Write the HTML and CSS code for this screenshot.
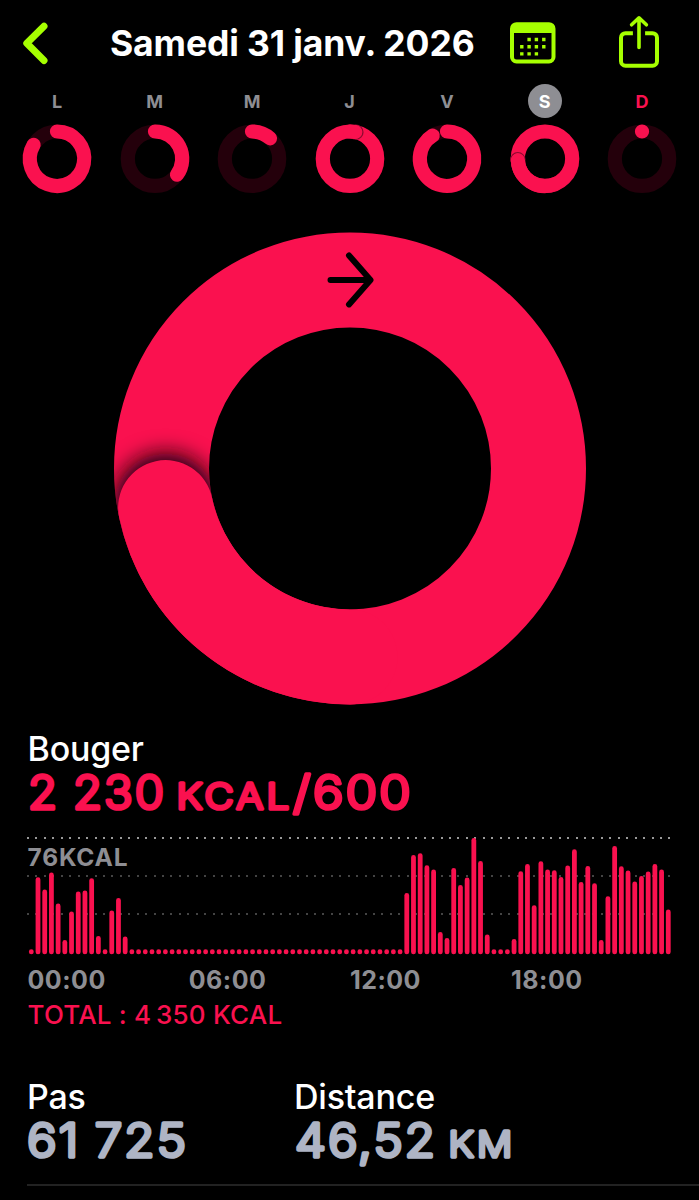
FILE: index.html
```
<!DOCTYPE html>
<html lang="fr">
<head>
<meta charset="utf-8">
<title>Activité</title>
<link rel="stylesheet" href="styles.css">
</head>
<body>
<header class="header">
  <svg class="back" width="32" height="48" viewBox="0 0 32 48"><path d="M25 7.300L7.800 24.200L25 41.500"/></svg>
  <h1 class="title"><span>Samedi 31 janv. 2026</span></h1>
  <svg class="calendar" width="46" height="42" viewBox="0 0 46 42">
    <rect class="frame" x="2" y="3.200" width="41.500" height="37.200" rx="4.500"/>
    <path class="fill" d="M2 12V7a5 5 0 0 1 5-5h31.500a5 5 0 0 1 5 5v5z"/>
    <path class="fill" d="M17.400 16.800h3.400v3.400h-3.400zM24.700 16.800h3.400v3.400h-3.400zM32.100 16.800h3.400v3.400h-3.400zM10.100 24h3.400v3.400h-3.400zM17.400 24h3.400v3.400h-3.400zM24.700 24h3.400v3.400h-3.400zM32.100 24h3.400v3.400h-3.400zM10.100 31.200h3.400v3.400h-3.400zM17.400 31.200h3.400v3.400h-3.400zM24.700 31.200h3.400v3.400h-3.400z"/>
  </svg>
  <svg class="share" width="42" height="54" viewBox="0 0 42 54">
    <path d="M14.900 19.200H7.500a4.500 4.500 0 0 0-4.500 4.500v23.500a4.500 4.500 0 0 0 4.500 4.500h27a4.500 4.500 0 0 0 4.500-4.500v-23.500a4.500 4.500 0 0 0-4.500-4.500h-7.400"/>
    <path class="arrow" d="M21 33.500V4M13.600 10.800L21 3.800L28.400 10.800"/>
  </svg>
</header>
<nav class="week" id="week"></nav>
<section class="hero">
  <svg width="480" height="480" viewBox="0 0 480 480">
    <defs>
      <filter id="soft" x="-60%" y="-60%" width="220%" height="220%"><feGaussianBlur stdDeviation="10.500"/></filter>
      <mask id="ring-mask" maskUnits="userSpaceOnUse" x="0" y="0" width="480" height="480"><circle cx="240" cy="240" r="188.500" fill="none" stroke="#fff" stroke-width="95"/></mask>
    </defs>
    <circle class="move" cx="240" cy="240" r="188.500" stroke-width="95"/>
    <g mask="url(#ring-mask)"><circle class="shade" cx="55.600" cy="276" r="51" filter="url(#soft)"/></g>
    <path class="move cap" d="M240 428.500A188.500 188.500 0 0 1 55.600 279.200" stroke-width="95"/>
    <path class="direction" d="M220.500 51.500H260M239 27L260.500 51.500L239 76"/>
  </svg>
</section>
<section class="move-stats">
  <h2 class="label">Bouger</h2>
  <svg class="value pink" width="420" height="54" viewBox="0 0 420 54">
    <text x="0" y="41.500" textLength="138" lengthAdjust="spacingAndGlyphs">2&#8197;230</text>
    <text class="unit" x="148.500" y="41.500" textLength="116" lengthAdjust="spacingAndGlyphs">KCAL</text>
    <text x="265" y="41.500" textLength="120" lengthAdjust="spacingAndGlyphs">/600</text>
  </svg>
  <div class="chart">
    <span class="peak">76KCAL</span>
    <div class="rule top"></div><div class="rule"></div><div class="rule"></div>
    <svg class="bars" id="bars" width="643" height="118" viewBox="0 0 643 118"></svg>
  </div>
  <div class="hours"><span>00:00</span><span>06:00</span><span>12:00</span><span>18:00</span></div>
  <p class="total">TOTAL : 4&#8239;350 KCAL</p>
</section>
<section class="details">
  <div>
    <h2 class="label">Pas</h2>
    <svg class="value grey" width="200" height="60" viewBox="0 0 200 60">
      <text x="0" y="41.500" textLength="161" lengthAdjust="spacingAndGlyphs">61&#8197;725</text>
    </svg>
  </div>
  <div>
    <h2 class="label">Distance</h2>
    <svg class="value grey" width="260" height="60" viewBox="0 0 260 60">
      <text x="1" y="41.500" textLength="142" lengthAdjust="spacingAndGlyphs">46,52</text>
      <text class="unit" x="154.500" y="41.500" textLength="67" lengthAdjust="spacingAndGlyphs">KM</text>
    </svg>
  </div>
</section>
<script src="app.js"></script>
</body>
</html>
```

FILE: styles.css
```
* { box-sizing: border-box; }
body {
  margin: 0;
  width: 699px;
  height: 1200px;
  overflow: hidden;
  background: #000;
  color: #fff;
  font-family: Inter, "Liberation Sans", sans-serif;
}
svg { display: block; overflow: visible; flex: none; }
h1, h2, p { margin: 0; white-space: nowrap; }

.header { display: flex; align-items: flex-start; height: 84px; padding: 0 39px 0 19px; }
.header svg { fill: none; stroke: #a6ff00; stroke-linejoin: round; }
.back { margin-top: 19px; stroke-width: 7; stroke-linecap: round; }
.title { width: 364px; margin: 22px 0 0 59px; font-size: 35.5px; line-height: 43px; font-weight: 750; letter-spacing: -0.12px; }
.calendar { margin: 21px 0 0 36px; }
.calendar .frame { stroke-width: 4; }
.header .calendar .fill { fill: #a6ff00; stroke: none; }
.share { margin: 14px 0 0 auto; stroke-width: 4; }
.share .arrow { stroke-linecap: round; stroke-width: 3.600; }

.week { display: grid; grid-template-columns: repeat(7, 97.500px); margin-left: 8.300px; height: 144px; }
.day { display: flex; flex-direction: column; align-items: center; }
.day span {
  width: 34px; height: 34px; border-radius: 50%;
  font-size: 18px; line-height: 35px; font-weight: 700; text-align: center; color: #8e8e93;
}
.day svg { margin-top: 5px; }
.day .today { background: #8e8e93; color: #fff; }
.day .next { color: #fa114f; }
.track { fill: none; stroke: #24000b; }
.move { fill: none; stroke: #fa114f; }
.cap { stroke-linecap: round; }
.shade { fill: #17000a; }

.hero { display: flex; justify-content: center; height: 505px; padding-left: 1px; }
.hero svg { transform: translateY(.4px); }
.direction { fill: none; stroke: #000; stroke-width: 6; stroke-linecap: round; stroke-linejoin: round; }

.label { font-size: 34px; line-height: 40px; font-weight: 550; letter-spacing: -0.2px; }
.move-stats { padding-left: 27.500px; height: 348px; }
.move-stats .label { margin-top: -4px; }
.value { margin-top: -2px; font-size: 46px; font-weight: 350; letter-spacing: 2px; stroke-width: 3.600px; stroke-linejoin: round; stroke-linecap: round; }
.value .unit { font-size: 36px; letter-spacing: 3px; }
.pink { fill: #fa114f; stroke: #fa114f; }
.grey { fill: #aeb4c4; stroke: #aeb4c4; }

.chart { position: relative; width: 643px; height: 117.500px; margin: 16px 0 0 -.500px; }
.rule { height: 2px; margin-bottom: 36px; background: repeating-linear-gradient(90deg, #444 0 2px, transparent 2px 8.440px); }
.rule.top { background: repeating-linear-gradient(90deg, #999 0 2px, transparent 2px 8.440px); }
.peak { position: absolute; left: .500px; top: 6px; font-size: 24.500px; line-height: 29px; font-weight: 720; letter-spacing: .8px; color: #8e8e93; }
.bars { position: absolute; left: 0; top: 0; fill: #fa114f; }

.hours { display: grid; grid-template-columns: repeat(4, 161.200px); margin-top: 10px; font-size: 25px; line-height: 30px; font-weight: 650; letter-spacing: .5px; color: #8e8e93; }
.total { margin-top: 4.500px; font-size: 26px; line-height: 32px; font-weight: 520; letter-spacing: .2px; color: #fa114f; }

.details { display: grid; grid-template-columns: 267px 1fr; height: 109px; margin-left: 27px; border-bottom: 2px solid #222; }
```

FILE: app.js
```
const SVG_START = '<svg width="70" height="70" viewBox="0 -0.7 70 70">';

// Ring progress for each weekday, as a fraction of the daily goal.
const days = [
  ['L', 0.835], ['M', 0.35], ['M', 0.115], ['J', 1.03], ['V', 0.912], ['S', 1.74, 'today'], ['D', 0.0001, 'next']
];

function arc(from, to) {
  const point = t => {
    const a = t * 2 * Math.PI;
    return `${35 + 27.2 * Math.sin(a)} ${35 - 27.2 * Math.cos(a)}`;
  };
  const large = to - from > 0.5 ? 1 : 0;
  return `<path class="move cap" stroke-width="14.2" d="M${point(from)}A27.2 27.2 0 ${large} 1 ${point(to)}"/>`;
}

document.getElementById('week').innerHTML = days.map(([name, value, state = '']) => {
  let ring = '<circle class="track" cx="35" cy="35" r="27.2" stroke-width="14.2"/>';
  if (value < 1) {
    ring += arc(0, value);
  } else {
    const end = value - 1;
    const a = end * 2 * Math.PI;
    const x = 35 + 27.2 * Math.sin(a + 0.03);
    const y = 35 - 27.2 * Math.cos(a + 0.03);
    ring += '<circle class="move" cx="35" cy="35" r="27.2" stroke-width="14.2"/>' +
      `<circle cx="${x}" cy="${y}" r="7" fill="none" stroke="#8d0a30" stroke-width="1.4"/>` +
      arc(Math.max(0, end - 0.3), end);
  }
  return `<div class="day"><span class="${state}">${name}</span>${SVG_START}${ring}</svg></div>`;
}).join('');

// Bar heights in pixels, one per quarter of an hour.
const none = n => Array(n).fill(5);
const heights = [
  5, 77, 64.7, 81.7, 50.7, 14.3, 42.7, 62.7, 63.7, 76, 18.3, 5, 43.7, 56.3, 17.7,
  ...none(41),
  61.3, 99.3, 101, 89, 84.7, 22.3, 16.3, 86.3, 69.3, 76.7, 116.3, 93.3, 19.7,
  ...none(3),
  15.3, 83, 90.3, 49, 93, 84.7, 84, 77.3, 88.7, 105, 72.3, 88.3, 71, 14.3, 58, 108.3,
  88, 83.7, 72.7, 78.3, 82.7, 90.3, 84.7, 44.7
];
document.getElementById('bars').innerHTML = heights.map((h, i) =>
  `<rect x="${(1.9 + i * 6.705).toFixed(2)}" y="${(117.3 - h).toFixed(1)}" width="4.8" height="${h}" rx="2.4"/>`
).join('');
```
